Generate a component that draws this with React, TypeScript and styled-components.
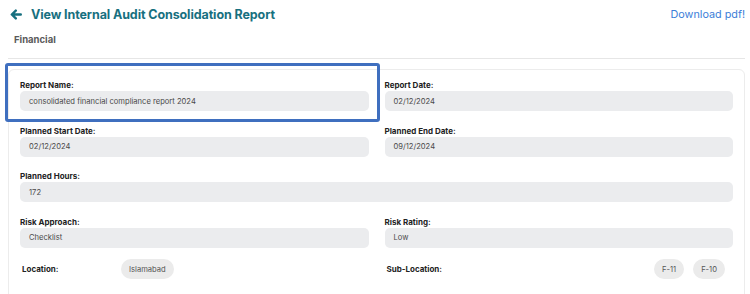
import { createGlobalStyle } from 'styled-components';
import styled from 'styled-components';

const GlobalStyle = createGlobalStyle`
  body {
    margin: 0;
    background: #ffffff;
    font-family: Inter, "Noto Sans", sans-serif;
  }
`;

const Page = styled.div`
  width: 750px;
  height: 294px;
  overflow: hidden;
  box-sizing: border-box;
  padding: 0 5px 0 8px;
`;

const Header = styled.div`
  display: flex;
  align-items: center;
  justify-content: space-between;
  height: 29px;
  padding: 0 0 0 2px;
`;

const TitleGroup = styled.div`
  display: flex;
  align-items: center;
  gap: 9px;
  color: #17707f;
`;

const Title = styled.h1`
  margin: 0;
  font-size: 12.5px;
  font-weight: 700;
  letter-spacing: -0.1px;
  color: #17707f;
`;

const DownloadLink = styled.a`
  font-size: 10.8px;
  color: #3b7dd8;
  text-decoration: none;
  cursor: pointer;
`;

const SubTitle = styled.div`
  font-size: 9.5px;
  font-weight: 700;
  color: #5a5a5a;
  padding: 5px 0 0 6px;
  height: 20px;
  box-sizing: border-box;
`;

const Divider = styled.hr`
  margin: 9px 0 0 0;
  border: none;
  border-top: 1px solid #e6e6e6;
`;

const Card = styled.div`
  margin-top: 10px;
  border: 1px solid #ececec;
  border-radius: 6px;
  padding: 10px 11px 40px 11px;
  display: grid;
  grid-template-columns: 1fr 1fr;
  column-gap: 16px;
  row-gap: 14.5px;
`;

const Field = styled.div<{ $full?: boolean; $highlight?: boolean }>`
  display: flex;
  flex-direction: column;
  gap: 1px;
  position: relative;
  grid-column: ${(p) => (p.$full ? '1 / span 2' : 'auto')};
  ${(p) =>
    p.$highlight &&
    `
    &::before {
      content: '';
      position: absolute;
      left: -15px;
      right: -11px;
      top: -17px;
      bottom: -11px;
      border: 3px solid #3f6fbf;
      border-radius: 3px;
      pointer-events: none;
    }
  `}
`;

const Label = styled.label`
  font-size: 8px;
  line-height: 10px;
  font-weight: 700;
  color: #222222;
`;

const Value = styled.div`
  height: 20px;
  border-radius: 5px;
  background: #ebecee;
  font-size: 7.6px;
  color: #4a4a4a;
  display: flex;
  align-items: center;
  padding: 0 9px;
`;

const ChipRow = styled.div<{ $end?: boolean }>`
  display: flex;
  align-items: center;
  gap: 9px;
  margin-top: -3px;
  padding-right: ${(p) => (p.$end ? '8px' : '0')};
`;

const ChipLabel = styled.span<{ $width?: number }>`
  font-size: 8px;
  font-weight: 700;
  color: #222222;
  padding-left: 2px;
  flex: ${(p) => (p.$width ? `0 0 ${p.$width}px` : '1 1 auto')};
`;

const Chip = styled.span`
  height: 20px;
  border-radius: 10px;
  background: #ebebeb;
  font-size: 7.6px;
  color: #555555;
  display: inline-flex;
  align-items: center;
  padding: 0 8px;
`;

function BackArrow() {
  return (
    <svg width="12" height="11" viewBox="0 0 12 11" fill="none">
      <path
        d="M10.8 5.5H2.2M5.8 1.6L1.8 5.5L5.8 9.4"
        stroke="#17707f"
        strokeWidth="2.4"
        strokeLinecap="round"
        strokeLinejoin="round"
      />
    </svg>
  );
}

export default function App() {
  return (
    <Page>
      <GlobalStyle />
      <Header>
        <TitleGroup>
          <BackArrow />
          <Title>View Internal Audit Consolidation Report</Title>
        </TitleGroup>
        <DownloadLink>Download pdf!</DownloadLink>
      </Header>
      <SubTitle>Financial</SubTitle>
      <Divider />
      <Card>
        <Field $highlight>
          <Label>Report Name:</Label>
          <Value>consolidated financial compliance report 2024</Value>
        </Field>
        <Field>
          <Label>Report Date:</Label>
          <Value>02/12/2024</Value>
        </Field>
        <Field>
          <Label>Planned Start Date:</Label>
          <Value>02/12/2024</Value>
        </Field>
        <Field>
          <Label>Planned End Date:</Label>
          <Value>09/12/2024</Value>
        </Field>
        <Field $full>
          <Label>Planned Hours:</Label>
          <Value>172</Value>
        </Field>
        <Field>
          <Label>Risk Approach:</Label>
          <Value>Checklist</Value>
        </Field>
        <Field>
          <Label>Risk Rating:</Label>
          <Value>Low</Value>
        </Field>
        <ChipRow>
          <ChipLabel $width={90}>Location:</ChipLabel>
          <Chip>Islamabad</Chip>
        </ChipRow>
        <ChipRow $end>
          <ChipLabel>Sub-Location:</ChipLabel>
          <Chip>F-11</Chip>
          <Chip>F-10</Chip>
        </ChipRow>
      </Card>
    </Page>
  );
}
